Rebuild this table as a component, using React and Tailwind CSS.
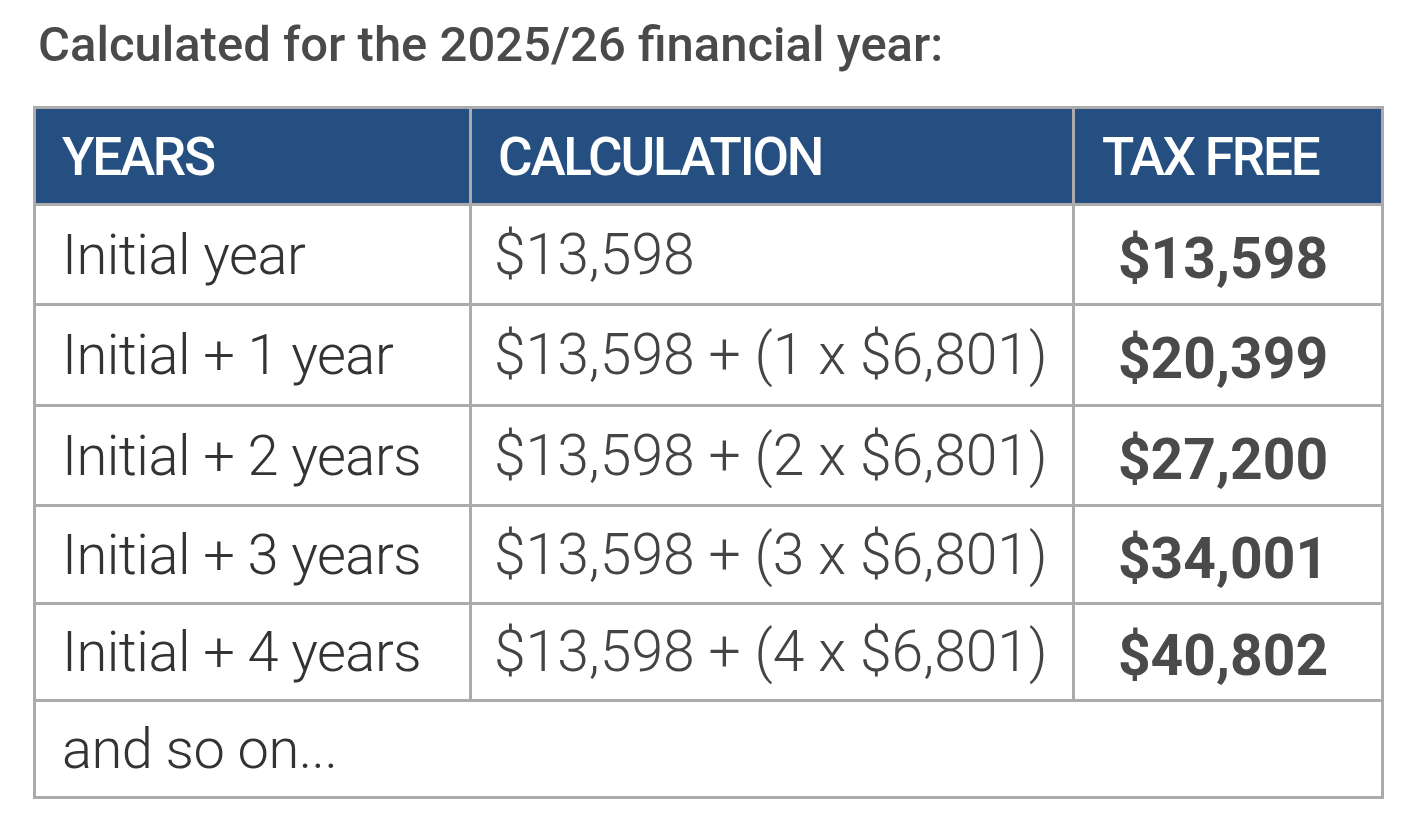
export default function App() {
  const rows = [
    ["Initial year", "$13,598", "$13,598"],
    ["Initial + 1 year", "$13,598 + (1 x $6,801)", "$20,399"],
    ["Initial + 2 years", "$13,598 + (2 x $6,801)", "$27,200"],
    ["Initial + 3 years", "$13,598 + (3 x $6,801)", "$34,001"],
    ["Initial + 4 years", "$13,598 + (4 x $6,801)", "$40,802"],
  ];
  const heights = ["h-[100px]", "h-[101px]", "h-[100px]", "h-[98px]", "h-[95px]"];
  return (
    <div className="bg-white w-[1417px] h-[839px] pl-[33px] pt-[13px]" style={{ fontFamily: "Roboto, 'Liberation Sans', sans-serif" }}>
      <h1 className="text-[49px] leading-[64px] font-medium text-[#4a4a4a] pl-[5px] mb-[29px]">
        Calculated for the 2025/26 financial year:
      </h1>
      <table className="table-fixed border-collapse w-[1348px] border-[3px] border-[#ababab]">
        <colgroup>
          <col className="w-[436px]" />
          <col className="w-[603px]" />
          <col className="w-[309px]" />
        </colgroup>
        <thead>
          <tr className="h-[97px] bg-[#244f80] text-white">
            <th className="text-left font-medium text-[53px] pl-[26px] pt-[3px] border-[3px] border-[#ababab] tracking-[-2.2px]">YEARS</th>
            <th className="text-left font-medium text-[53px] pl-[26px] pt-[3px] border-[3px] border-[#ababab] tracking-[-2.2px]">CALCULATION</th>
            <th className="text-left font-medium text-[53px] pl-[27px] pt-[3px] border-[3px] border-[#ababab] tracking-[-2.2px]">TAX FREE</th>
          </tr>
        </thead>
        <tbody>
          {rows.map((r, i) => (
            <tr key={i} className={heights[i]}>
              <td className="pl-[26px] border-[3px] border-[#ababab] text-[56px] font-light text-[#333] tracking-[-0.5px] whitespace-nowrap">{r[0]}</td>
              <td className="pl-[22px] border-[3px] border-[#ababab] text-[57px] font-light text-[#444] whitespace-nowrap">{r[1]}</td>
              <td className="text-center pr-[10px] border-[3px] border-[#ababab] text-[57px] font-bold text-[#4a4a4a] pt-[8px]">{r[2]}</td>
            </tr>
          ))}
          <tr className="h-[97px]">
            <td colSpan={3} className="pl-[26px] border-[3px] border-[#ababab] text-[56px] font-light text-[#333] tracking-[-0.5px]">and so on...</td>
          </tr>
        </tbody>
      </table>
    </div>
  );
}
